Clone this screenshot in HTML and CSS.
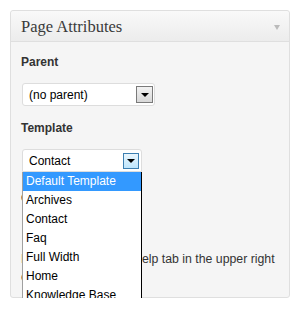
FILE: index.html
```html
<!DOCTYPE html>
<html lang="en">
<head>
    <meta charset="UTF-8">
    <title>Page Attributes</title>
    <link rel="stylesheet" href="styles.css">
</head>
<body>
    <div class="postbox">
        <div class="postbox-header">
            <h3>Page Attributes</h3>
            <span class="handle-arrow"></span>
        </div>

        <div class="postbox-inside">
            <p class="field-label">Parent</p>
            <div class="fake-select parent-select">
                <span class="select-value">(no parent)</span>
                <span class="select-btn"><span class="caret"></span></span>
            </div>

            <p class="field-label template-label">Template</p>
            <div class="template-wrap">
                <div class="fake-select template-select">
                    <span class="select-value">Contact</span>
                    <span class="select-btn focused"><span class="caret"></span></span>
                </div>
                <ul class="select-list">
                    <li class="selected">Default Template</li>
                    <li>Archives</li>
                    <li>Contact</li>
                    <li>Faq</li>
                    <li>Full Width</li>
                    <li>Home</li>
                    <li>Knowledge Base</li>
                </ul>
            </div>

            <p class="field-label order-label">Order</p>
            <div class="order-input">0</div>

            <p class="help-text">Need help? Use the Help tab in the upper right of your screen.</p>
        </div>
    </div>
</body>
</html>
```

FILE: styles.css
```css
* {
    margin: 0;
    padding: 0;
    box-sizing: border-box;
}

body {
    background-color: #ffffff;
    padding: 10px 0 0 10px;
    font-family: 'Liberation Sans', Arial, sans-serif;
    font-size: 12px;
    color: #333333;
}

.postbox {
    width: 280px;
    background-color: #f5f5f5;
    border: 1px solid #dfdfdf;
    border-radius: 3px;
}

.postbox-header {
    height: 31px;
    display: flex;
    align-items: center;
    justify-content: space-between;
    padding: 0 9px 0 10px;
    background: linear-gradient(to bottom, #f9f9f9, #ececec);
    border-bottom: 1px solid #dfdfdf;
    border-radius: 3px 3px 0 0;
}

.postbox-header h3 {
    font-family: 'Liberation Serif', 'Times New Roman', serif;
    font-size: 16.5px;
    font-weight: normal;
    color: #3a3a3a;
    line-height: 20px;
    padding-top: 1px;
}

.handle-arrow {
    width: 0;
    height: 0;
    border-left: 3px solid transparent;
    border-right: 3px solid transparent;
    border-top: 5px solid #bbbbbb;
    margin-top: 2px;
}

.postbox-inside {
    padding: 0 14px 11px 10px;
}

.field-label {
    font-weight: bold;
    line-height: 16px;
    margin-top: 12px;
}

.template-label {
    margin-top: 14px;
}

.fake-select {
    display: flex;
    align-items: center;
    justify-content: space-between;
    height: 23px;
    margin-left: 1px;
    background-color: #ffffff;
    border: 1px solid #dddddd;
    border-radius: 3px;
    padding: 0 1px 0 6px;
    color: #000000;
}

.parent-select {
    width: 133px;
    margin-top: 13px;
}

.template-wrap {
    position: relative;
    margin-top: 13px;
}

.template-select {
    width: 120px;
    border-radius: 3px 3px 0 0;
    padding-right: 2px;
}

.select-btn {
    width: 17px;
    height: 17px;
    display: flex;
    align-items: center;
    justify-content: center;
    border: 1px solid #7a7a7a;
    background: linear-gradient(to bottom, #f2f2f2, #d8d8d8);
}

.select-btn.focused {
    width: 16px;
    height: 16px;
    border-color: #3c7fb1;
    background: linear-gradient(to bottom, #eaf6fd, #bee6fd);
}

.caret {
    width: 0;
    height: 0;
    border-left: 4px solid transparent;
    border-right: 4px solid transparent;
    border-top: 4px solid #000000;
    margin-top: 1px;
}

.select-list {
    position: absolute;
    left: 1px;
    top: 23px;
    width: 120px;
    list-style: none;
    background-color: #ffffff;
    border-left: 1px solid #a0a0a0;
    border-right: 1px solid #000000;
    border-bottom: 1px solid #000000;
    color: #000000;
    z-index: 2;
}

.select-list li {
    height: 19px;
    line-height: 19px;
    padding-left: 3px;
    white-space: nowrap;
}

.select-list li.selected {
    background-color: #3399ff;
    color: #ffffff;
}

.order-label {
    margin-top: 18px;
}

.order-input {
    width: 45px;
    height: 22px;
    margin-top: 6px;
    margin-left: 1px;
    padding: 3px 5px;
    background-color: #ffffff;
    border: 1px solid #dddddd;
    border-radius: 3px;
}

.help-text {
    margin-top: 16px;
    line-height: 18px;
    font-size: 12.3px;
}
```
